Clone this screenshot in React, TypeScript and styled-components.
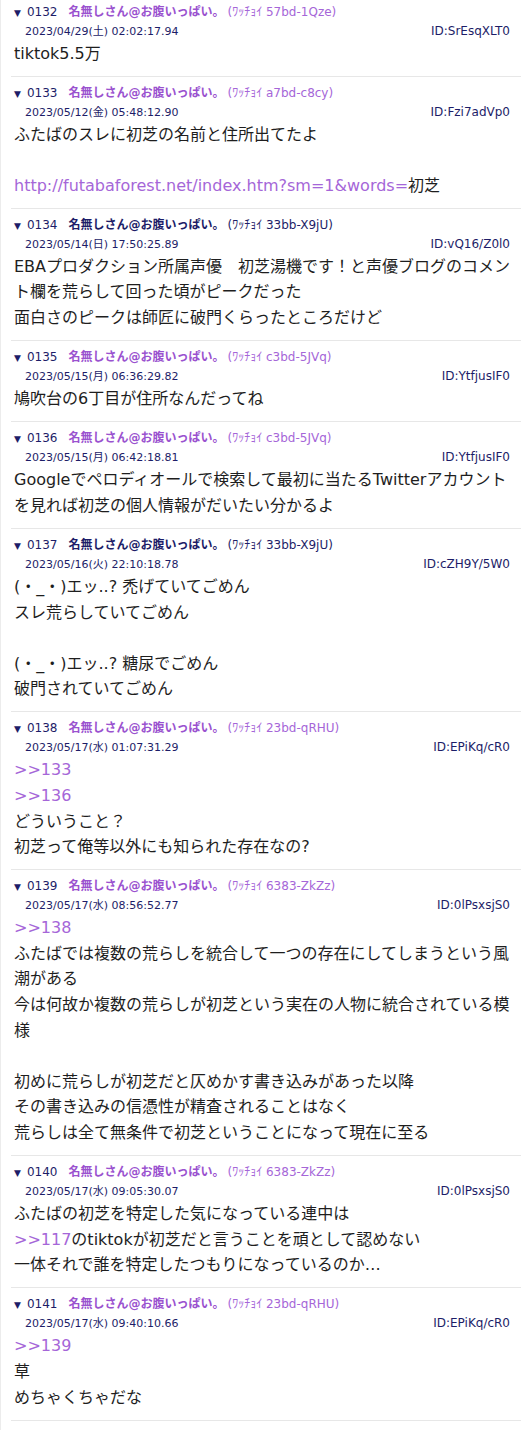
import React from "react";
import styled, { createGlobalStyle } from "styled-components";

const GlobalStyle = createGlobalStyle`
  html, body {
    margin: 0;
    padding: 0;
    background: #ffffff;
  }
  body {
    font-family: "DejaVu Sans", "Noto Sans CJK JP", sans-serif;
    color: #1e1e1e;
  }
`;

type Tone = "purple" | "navy";

interface PostData {
  no: string;
  tone: Tone;
  trip: string;
  date: string;
  id: string;
  lines: string[];
}

const posts: PostData[] = [
  {
    no: "0132",
    tone: "purple",
    trip: "ﾜｯﾁｮｲ 57bd-1Qze",
    date: "2023/04/29(土) 02:02:17.94",
    id: "ID:SrEsqXLT0",
    lines: ["tiktok5.5万"],
  },
  {
    no: "0133",
    tone: "purple",
    trip: "ﾜｯﾁｮｲ a7bd-c8cy",
    date: "2023/05/12(金) 05:48:12.90",
    id: "ID:Fzi7adVp0",
    lines: [
      "ふたばのスレに初芝の名前と住所出てたよ",
      "",
      "http://futabaforest.net/index.htm?sm=1&words=初芝",
    ],
  },
  {
    no: "0134",
    tone: "navy",
    trip: "ﾜｯﾁｮｲ 33bb-X9jU",
    date: "2023/05/14(日) 17:50:25.89",
    id: "ID:vQ16/Z0l0",
    lines: [
      "EBAプロダクション所属声優　初芝湯機です！と声優ブログのコメント欄を荒らして回った頃がピークだった",
      "面白さのピークは師匠に破門くらったところだけど",
    ],
  },
  {
    no: "0135",
    tone: "purple",
    trip: "ﾜｯﾁｮｲ c3bd-5JVq",
    date: "2023/05/15(月) 06:36:29.82",
    id: "ID:YtfjusIF0",
    lines: ["鳩吹台の6丁目が住所なんだってね"],
  },
  {
    no: "0136",
    tone: "purple",
    trip: "ﾜｯﾁｮｲ c3bd-5JVq",
    date: "2023/05/15(月) 06:42:18.81",
    id: "ID:YtfjusIF0",
    lines: [
      "Googleでペロディオールで検索して最初に当たるTwitterアカウントを見れば初芝の個人情報がだいたい分かるよ",
    ],
  },
  {
    no: "0137",
    tone: "navy",
    trip: "ﾜｯﾁｮｲ 33bb-X9jU",
    date: "2023/05/16(火) 22:10:18.78",
    id: "ID:cZH9Y/5W0",
    lines: [
      "(・_・)エッ..? 禿げていてごめん",
      "スレ荒らしていてごめん",
      "",
      "(・_・)エッ..? 糖尿でごめん",
      "破門されていてごめん",
    ],
  },
  {
    no: "0138",
    tone: "purple",
    trip: "ﾜｯﾁｮｲ 23bd-qRHU",
    date: "2023/05/17(水) 01:07:31.29",
    id: "ID:EPiKq/cR0",
    lines: [">>133", ">>136", "どういうこと？", "初芝って俺等以外にも知られた存在なの?"],
  },
  {
    no: "0139",
    tone: "purple",
    trip: "ﾜｯﾁｮｲ 6383-ZkZz",
    date: "2023/05/17(水) 08:56:52.77",
    id: "ID:0lPsxsjS0",
    lines: [
      ">>138",
      "ふたばでは複数の荒らしを統合して一つの存在にしてしまうという風潮がある",
      "今は何故か複数の荒らしが初芝という実在の人物に統合されている模様",
      "",
      "初めに荒らしが初芝だと仄めかす書き込みがあった以降",
      "その書き込みの信憑性が精査されることはなく",
      "荒らしは全て無条件で初芝ということになって現在に至る",
    ],
  },
  {
    no: "0140",
    tone: "purple",
    trip: "ﾜｯﾁｮｲ 6383-ZkZz",
    date: "2023/05/17(水) 09:05:30.07",
    id: "ID:0lPsxsjS0",
    lines: [
      "ふたばの初芝を特定した気になっている連中は",
      ">>117のtiktokが初芝だと言うことを頑として認めない",
      "一体それで誰を特定したつもりになっているのか…",
    ],
  },
  {
    no: "0141",
    tone: "purple",
    trip: "ﾜｯﾁｮｲ 23bd-qRHU",
    date: "2023/05/17(水) 09:40:10.66",
    id: "ID:EPiKq/cR0",
    lines: [">>139", "草", "めちゃくちゃだな"],
  },
];

const NAVY = "#1d1d68";
const PURPLE = "#9a52cf";
const PURPLE_LIGHT = "#a566d8";

const Thread = styled.div`
  box-sizing: border-box;
  min-height: 1430px;
  border-left: 1px solid #ececec;
  padding: 0 9px 0 10px;
`;

const Post = styled.article`
  padding: 6px 3px 9.5px 3px;
  border-bottom: 1px solid #e7e7e7;

  &:first-child {
    padding-top: 1.5px;
  }
`;

const Header = styled.div`
  display: flex;
  align-items: baseline;
  height: 20px;
  line-height: 20px;
  font-size: 12px;
  white-space: nowrap;
`;

const Arrow = styled.span`
  font-size: 9px;
  color: ${NAVY};
  margin-right: 6px;
`;

const Number = styled.span`
  color: ${NAVY};
  margin-right: 11px;
`;

const Name = styled.span<{ $tone: Tone }>`
  font-weight: bold;
  color: ${(p) => (p.$tone === "navy" ? NAVY : PURPLE)};
`;

const Trip = styled.span<{ $tone: Tone }>`
  margin-left: 3px;
  color: ${(p) => (p.$tone === "navy" ? NAVY : PURPLE_LIGHT)};
`;

const MetaRow = styled.div`
  display: flex;
  justify-content: space-between;
  align-items: baseline;
  height: 19px;
  line-height: 19px;
  padding: 0 8px 0 11px;
  color: ${NAVY};
`;

const DateText = styled.span`
  font-size: 11px;
`;

const IdText = styled.span`
  font-size: 12px;
`;

const Body = styled.div`
  font-size: 16px;
  line-height: 25.6px;
`;

const Line = styled.div`
  min-height: 25.6px;
  word-break: normal;
  overflow-wrap: anywhere;
`;

const Ref = styled.span`
  color: ${PURPLE_LIGHT};
`;

function renderLine(text: string) {
  const parts: React.ReactNode[] = [];
  const re = /(>>\d+|https?:\/\/[A-Za-z0-9./?=&_%-]+)/g;
  let last = 0;
  let m: RegExpExecArray | null;
  let k = 0;
  while ((m = re.exec(text)) !== null) {
    if (m.index > last) parts.push(text.slice(last, m.index));
    parts.push(<Ref key={k++}>{m[0]}</Ref>);
    last = m.index + m[0].length;
  }
  if (last < text.length) parts.push(text.slice(last));
  return parts;
}

export default function App() {
  return (
    <>
      <GlobalStyle />
      <Thread>
        {posts.map((p) => (
          <Post key={p.no}>
            <Header>
              <Arrow>▼</Arrow>
              <Number>{p.no}</Number>
              <Name $tone={p.tone}>名無しさん@お腹いっぱい。</Name>
              <Trip $tone={p.tone}>({p.trip})</Trip>
            </Header>
            <MetaRow>
              <DateText>{p.date}</DateText>
              <IdText>{p.id}</IdText>
            </MetaRow>
            <Body>
              {p.lines.map((l, i) => (
                <Line key={i}>{l ? renderLine(l) : "\u00a0"}</Line>
              ))}
            </Body>
          </Post>
        ))}
      </Thread>
    </>
  );
}
